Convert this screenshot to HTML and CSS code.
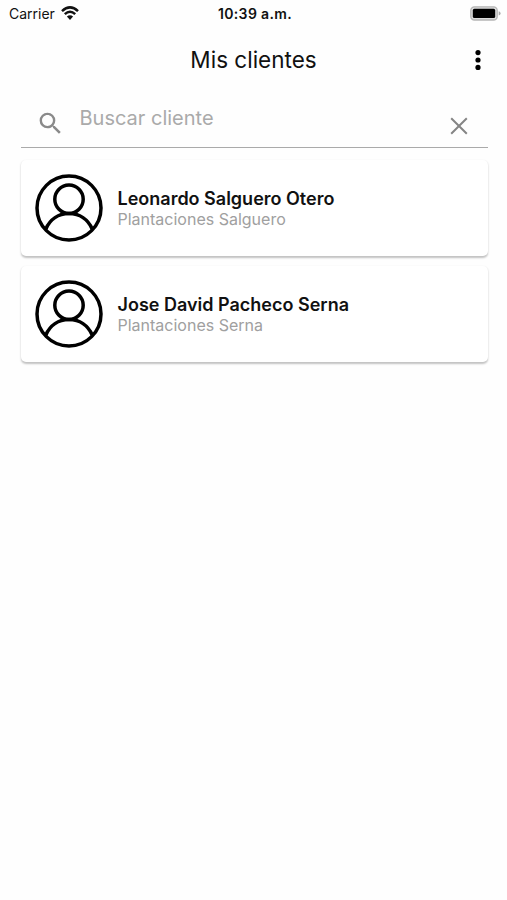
FILE: index.html
```html
<!DOCTYPE html>
<html lang="es">
<head>
<meta charset="utf-8">
<title>Mis clientes</title>
<link rel="stylesheet" href="styles.css">
</head>
<body>
<div class="status">
  <div class="carrier"><span>Carrier</span>
    <svg class="wifi" viewBox="0 0 18 14" fill="none" stroke="#111" stroke-width="2.5"><path d="M1 5.1Q9-2.3 17 5.1M3.8 8.2Q9 3.4 14.2 8.2"/><path d="M5.9 10.6Q9 7.7 12.1 10.6L9 13.9Z" fill="#111" stroke="none"/></svg>
  </div>
  <div class="time">10:39 a.m.</div>
  <svg class="battery" viewBox="0 0 31 15"><rect x=".8" y=".8" width="26.4" height="13.2" rx="3.6" fill="#ddd" stroke="#b5b5b5" stroke-width="1.3"/><rect x="2.8" y="2.8" width="22.4" height="9.2" rx="1.6"/><path d="M28.7 5.2Q30.6 5.8 30.6 7.4T28.7 9.6Z" fill="#aaa"/></svg>
</div>
<header class="bar">
  <h1>Mis clientes</h1>
  <svg class="more" viewBox="0 0 6 20"><circle cx="3" cy="2.6" r="2.6"/><circle cx="3" cy="10" r="2.6"/><circle cx="3" cy="17.4" r="2.6"/></svg>
</header>
<main>
  <div class="search">
    <svg class="glass" viewBox="0 0 24 24" fill="#8a8a8a"><path d="M15.5 14h-.79l-.28-.27A6.47 6.47 0 0 0 16 9.5 6.5 6.5 0 1 0 9.5 16c1.61 0 3.09-.59 4.23-1.57l.27.28v.79l5 4.99L20.49 19l-4.99-5zm-6 0C7.01 14 5 11.99 5 9.5S7.01 5 9.5 5 14 7.01 14 9.5 11.99 14 9.5 14z"/></svg>
    <span class="hint">Buscar cliente</span>
    <svg class="clear" viewBox="0 0 18 18" stroke="#858585" stroke-width="2"><path d="M1.2 1.2 16.8 16.8M16.8 1.2 1.2 16.8"/></svg>
  </div>
  <article class="card">
    <svg class="avatar" viewBox="0 0 68 68" fill="none" stroke="#000" stroke-width="3.5"><circle cx="34" cy="34" r="32"/><circle cx="34" cy="25.3" r="14.2"/><path d="M10.7 55.2C15 45.5 23.5 39.6 34 39.6S53 45.5 57.3 55.2"/></svg>
    <div><div class="name n1">Leonardo Salguero Otero</div><div class="farm f1">Plantaciones Salguero</div></div>
  </article>
  <article class="card">
    <svg class="avatar" viewBox="0 0 68 68" fill="none" stroke="#000" stroke-width="3.5"><circle cx="34" cy="34" r="32"/><circle cx="34" cy="25.3" r="14.2"/><path d="M10.7 55.2C15 45.5 23.5 39.6 34 39.6S53 45.5 57.3 55.2"/></svg>
    <div><div class="name n2">Jose David Pacheco Serna</div><div class="farm f2">Plantaciones Serna</div></div>
  </article>
</main>
</body>
</html>
```
FILE: styles.css
```css
* { box-sizing: border-box; }
body { margin: 0; background: #fefefe; color: #111; font-family: Inter, "Liberation Sans", sans-serif; height: 900px; overflow: hidden; }
svg { display: block; flex: none; }
.status { height: 28px; display: grid; grid-template-columns: 1fr auto 1fr; align-items: center; padding: 0 6px 0 9px; font-size: 14px; line-height: 20px; }
.carrier { display: flex; align-items: center; gap: 6px; }
.wifi { width: 18px; height: 14px; margin-top: -2px; }
.time { font-weight: 600; letter-spacing: .35px; }
.battery { width: 31px; height: 15px; justify-self: end; margin-top: -1px; }
.bar { height: 64px; display: grid; grid-template-columns: 1fr auto 1fr; align-items: center; padding: 0 26px 0 26px; }
.bar h1 { grid-column: 2; margin: 0; font-size: 22.5px; line-height: 28px; font-weight: 400; }
.more { width: 6px; height: 20px; justify-self: end; }
main { padding: 0 19.5px 0 20.5px; }
.search { height: 56px; display: flex; align-items: flex-start; border-bottom: 1.5px solid #aaa; padding: 17px 20px 0 15px; margin-bottom: 12px; }
.glass { width: 29px; height: 29px; }
.hint { flex: 1; margin-left: 15px; margin-top: -4px; font-size: 20px; line-height: 26px; color: #aaa; }
.clear { width: 18px; height: 18px; margin-top: 8px; }
.card { height: 96px; margin-bottom: 10px; border-radius: 5px; background: #fff; box-shadow: 0 1.5px 2px rgba(0,0,0,.24); display: flex; align-items: center; padding-left: 14px; gap: 15px; }
.avatar { width: 68px; height: 68px; }
.name { font-size: 18px; line-height: 22px; font-weight: 600; }
.farm { font-size: 16px; line-height: 19px; color: #a0a0a0; }
```
